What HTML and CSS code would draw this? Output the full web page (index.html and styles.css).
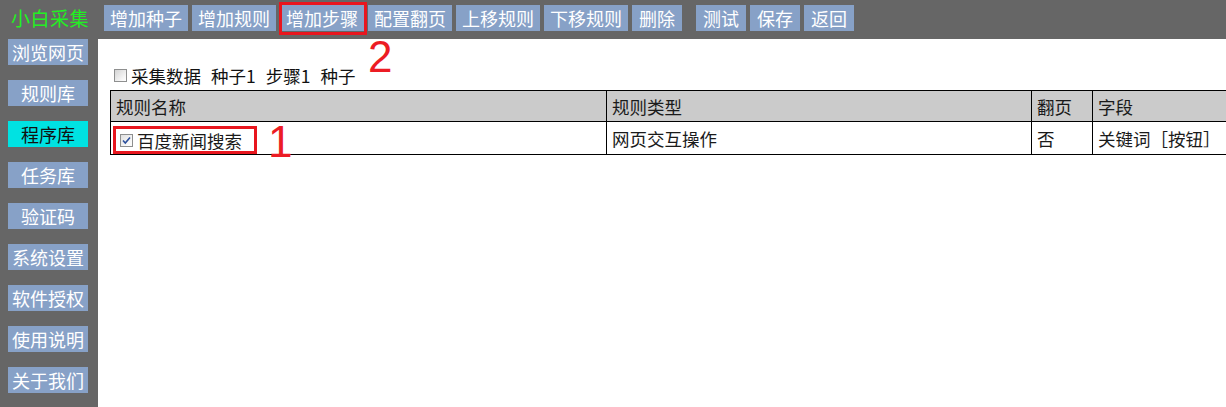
FILE: index.html
```html
<!DOCTYPE html>
<html lang="zh-CN">
<head>
<meta charset="utf-8">
<title>小白采集</title>
<link rel="stylesheet" href="styles.css">
</head>
<body>
<div class="app">
  <header class="topbar">
    <div class="brand">小白采集</div>
    <nav class="actions">
      <span class="btn">增加种子</span>
      <span class="btn">增加规则</span>
      <span class="btn highlight">增加步骤</span>
      <span class="btn">配置翻页</span>
      <span class="btn">上移规则</span>
      <span class="btn">下移规则</span>
      <span class="btn short">删除</span>
      <span class="btn short spaced">测试</span>
      <span class="btn short">保存</span>
      <span class="btn short">返回</span>
    </nav>
  </header>
  <div class="main">
    <aside class="sidebar">
      <span class="side-btn">浏览网页</span>
      <span class="side-btn">规则库</span>
      <span class="side-btn active">程序库</span>
      <span class="side-btn">任务库</span>
      <span class="side-btn">验证码</span>
      <span class="side-btn">系统设置</span>
      <span class="side-btn">软件授权</span>
      <span class="side-btn">使用说明</span>
      <span class="side-btn">关于我们</span>
    </aside>
    <section class="content">
      <div class="seedline">
        <span class="box"></span>
        <span>采集数据</span>
        <span>种子1</span>
        <span>步骤1</span>
        <span>种子</span>
      </div>
      <table class="rules">
        <colgroup>
          <col class="c1"><col class="c2"><col class="c3"><col class="c4">
        </colgroup>
        <thead>
          <tr><th>规则名称</th><th>规则类型</th><th>翻页</th><th>字段</th></tr>
        </thead>
        <tbody>
          <tr>
            <td>
              <span class="rule-name">
                <span class="box checked"><svg viewBox="0 0 11 11" width="11" height="11"><path d="M2 5.5 L4.3 8 L9 2.5" fill="none" stroke="#2b4f9c" stroke-width="1.6"/></svg></span>
                <span>百度新闻搜索</span>
              </span>
            </td>
            <td>网页交互操作</td>
            <td>否</td>
            <td>关键词［按钮］</td>
          </tr>
        </tbody>
      </table>
    </section>
  </div>
  <span class="mark mark-1">1</span>
  <span class="mark mark-2">2</span>
</div>
</body>
</html>
```
FILE: styles.css
```css
* { box-sizing: border-box; }
html, body { margin: 0; padding: 0; }
body {
  background: #666666;
  font-family: "Noto Sans CJK SC", "Noto Sans", sans-serif;
  width: 1226px;
  height: 407px;
  overflow: hidden;
}
.app {
  position: relative;
  width: 1226px;
  height: 407px;
  display: flex;
  flex-direction: column;
}
.topbar {
  height: 39px;
  display: flex;
  align-items: flex-start;
  padding-top: 5px;
}
.brand {
  width: 104px;
  padding-left: 11px;
  color: #22f022;
  font-size: 19px;
  line-height: 26px;
  letter-spacing: 0.5px;
}
.actions {
  display: flex;
  gap: 4px;
}
.btn {
  position: relative;
  width: 84px;
  height: 26px;
  line-height: 26px;
  text-align: center;
  background: #87a1c7;
  color: #ffffff;
  font-size: 18px;
}
.btn.short { width: 50px; }
.btn.spaced { margin-left: 10px; }
.btn.highlight::after {
  content: "";
  position: absolute;
  top: -3px; left: -1px; right: -3px; bottom: -4px;
  border: 3px solid #e8161e;
}
.main {
  flex: 1;
  display: flex;
  min-height: 0;
}
.sidebar {
  width: 98px;
  padding-left: 8px;
  display: flex;
  flex-direction: column;
  gap: 15px;
}
.side-btn {
  width: 80px;
  height: 26px;
  line-height: 26px;
  text-align: center;
  background: #87a1c7;
  color: #ffffff;
  font-size: 18px;
}
.side-btn.active {
  background: #00e2e2;
  color: #111111;
}
.content {
  flex: 1;
  background: #ffffff;
  padding: 24px 0 0 12px;
  overflow: hidden;
}
.seedline {
  display: flex;
  align-items: center;
  gap: 10px;
  height: 24px;
  font-size: 17.5px;
  color: #111111;
  padding-left: 4px;
}
.seedline .box { margin-right: -6px; }
.box {
  display: inline-flex;
  align-items: center;
  justify-content: center;
  width: 13px;
  height: 13px;
  border: 1px solid #8e8f8f;
  background: linear-gradient(135deg, #d4d4d4 0%, #f4f4f4 70%, #ffffff 100%);
  flex: none;
}
.box.checked { background: linear-gradient(135deg, #e0e0e0 0%, #fafafa 80%); }
.rules {
  margin-top: 3px;
  border-collapse: collapse;
  table-layout: fixed;
  width: 1260px;
  font-size: 17.5px;
  color: #1a1a1a;
}
.rules col.c1 { width: 496px; }
.rules col.c2 { width: 425px; }
.rules col.c3 { width: 61px; }
.rules col.c4 { width: 278px; }
.rules th, .rules td {
  border: 1px solid #000000;
  padding: 0 5px;
  text-align: left;
  font-weight: normal;
  white-space: nowrap;
}
.rules th {
  background: #cbcbcb;
  height: 31px;
}
.rules td { height: 33px; }
.rule-name {
  position: relative;
  display: inline-flex;
  align-items: center;
  gap: 4px;
  width: 138px;
  height: 22px;
  padding-left: 4px;
  vertical-align: middle;
}
.rule-name::after {
  content: "";
  position: absolute;
  inset: -3px;
  border: 3px solid #e8161e;
}
.mark {
  position: absolute;
  font-family: "Liberation Sans", Arial, sans-serif;
  font-size: 44px;
  line-height: 44px;
  color: #ec1c24;
}
.mark-1 { left: 268px; top: 120px; }
.mark-2 { left: 368px; top: 35px; }
```
